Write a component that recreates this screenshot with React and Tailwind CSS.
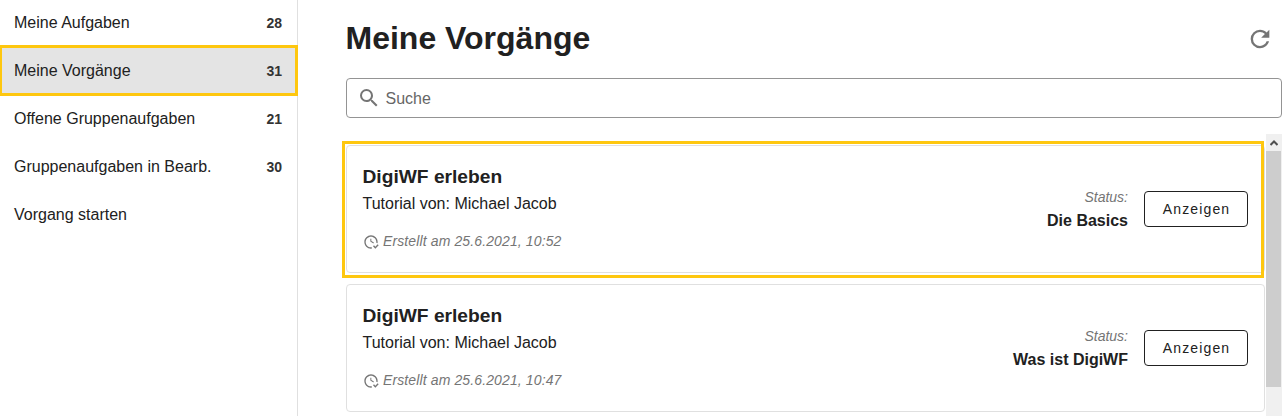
const navItems = [
  { label: 'Meine Aufgaben', count: 28 },
  { label: 'Meine Vorgänge', count: 31, active: true },
  { label: 'Offene Gruppenaufgaben', count: 21 },
  { label: 'Gruppenaufgaben in Bearb.', count: 30 },
  { label: 'Vorgang starten' },
];

const processes = [
  { title: 'DigiWF erleben', text: 'Tutorial von: Michael Jacob', created: '25.6.2021, 10:52', status: 'Die Basics', marked: true },
  { title: 'DigiWF erleben', text: 'Tutorial von: Michael Jacob', created: '25.6.2021, 10:47', status: 'Was ist DigiWF' },
];

function Icon({ d, className }) {
  return (
    <svg viewBox="0 0 24 24" fill="currentColor" className={className} aria-hidden="true">
      <path d={d} />
    </svg>
  );
}

const REFRESH =
  'M17.65,6.35C16.2,4.9 14.21,4 12,4A8,8 0 0,0 4,12A8,8 0 0,0 12,20C15.73,20 18.84,17.45 19.73,14H17.65C16.83,16.33 14.61,18 12,18A6,6 0 0,1 6,12A6,6 0 0,1 12,6C13.66,6 15.14,6.69 16.22,7.78L13,11H20V4L17.65,6.35Z';
const MAGNIFY =
  'M9.5,3A6.5,6.5 0 0,1 16,9.5C16,11.11 15.41,12.59 14.44,13.73L14.71,14H15.5L20.5,19L19,20.5L14,15.5V14.71L13.73,14.44C12.59,15.41 11.11,16 9.5,16A6.5,6.5 0 0,1 3,9.5A6.5,6.5 0 0,1 9.5,3M9.5,5C7,5 5,7 5,9.5C5,12 7,14 9.5,14C12,14 14,12 14,9.5C14,7 12,5 9.5,5Z';
const CLOCK_CHECK =
  'M23.5 17L18.5 22L15 18.5L16.5 17L18.5 19L22 15.5L23.5 17M13.1 19.9C12.7 20 12.4 20 12 20C7.6 20 4 16.4 4 12S7.6 4 12 4 20 7.6 20 12C20 12.4 20 12.7 19.9 13.1C20.6 13.2 21.2 13.4 21.8 13.7C21.9 13.1 22 12.6 22 12C22 6.5 17.5 2 12 2S2 6.5 2 12C2 17.5 6.5 22 12 22C12.6 22 13.2 21.9 13.7 21.8C13.4 21.3 13.2 20.7 13.1 19.9M15.6 14.1L11 11.3V7H12.5V10.5L16.4 12.8C16.1 13.2 15.8 13.6 15.6 14.1Z';

function NavItem({ label, count, active }) {
  return (
    <li className={`relative flex h-12 items-center justify-between pl-3.5 pr-[15px] ${active ? 'bg-[#e4e4e4]' : ''}`}>
      <span className="pt-0.5 text-base">{label}</span>
      {count && <span className="pt-0.5 text-[14px] font-bold text-[#333]">{count}</span>}
      {active && (
        <span className="pointer-events-none absolute -top-px -right-px -bottom-0.5 left-0 border-[3px] border-l-2 border-[#fec70f] bg-transparent" />
      )}
    </li>
  );
}

function ProcessCard({ title, text, created, status, marked }) {
  return (
    <article className="relative flex h-32 shrink-0 items-center justify-between rounded border border-[#e0e0e0] pr-4 pl-[15.5px]">
      <div className="flex flex-col pb-0.5">
        <h2 className="text-[19.2px] leading-7 font-bold">{title}</h2>
        <p className="text-base leading-[26px]">{text}</p>
        <p className="mt-3 flex items-center text-[14px] leading-6 text-[#757575] italic">
          <Icon d={CLOCK_CHECK} className="mt-0.5 mr-[4.5px] size-4" />
          <span className="tracking-[0.12px]">Erstellt am {created}</span>
        </p>
      </div>
      <div className="flex items-center gap-4">
        <div className="text-right">
          <p className="py-px text-[14px] leading-[22px] text-[#757575] italic">Status:</p>
          <p className="text-base leading-6 font-bold">{status}</p>
        </div>
        <button className="h-9 w-[104px] rounded border border-[#212121] pl-px text-[14px] tracking-[1.15px]">Anzeigen</button>
      </div>
      {marked && <span className="pointer-events-none absolute -top-[5px] right-0 -bottom-1.5 -left-[5px] border-[3px] border-[#fec70f]" />}
    </article>
  );
}

export default function App() {
  return (
    <div className="flex h-[416px] w-[1285px] overflow-hidden bg-white font-['Liberation_Sans',Arial,sans-serif] text-[#212121]">
      <nav className="w-[298px] shrink-0 border-r border-[#e0e0e0]">
        <ul className="-mt-0.5">
          {navItems.map((item) => (
            <NavItem key={item.label} {...item} />
          ))}
        </ul>
      </nav>
      <main className="flex min-w-0 flex-1 flex-col pr-[3px] pl-12">
        <header className="flex h-[78px] shrink-0 items-center justify-between pr-2">
          <h1 className="-ml-[0.5px] pb-0.5 text-[32px] leading-10 font-bold">Meine Vorgänge</h1>
          <Icon d={REFRESH} className="mb-px size-7 text-[#757575]" />
        </header>
        <div className="flex h-10 shrink-0 items-center gap-[4.5px] rounded border border-[#949494] pl-2.5 text-[#666]">
          <Icon d={MAGNIFY} className="size-6 text-[#757575]" />
          <span className="pt-0.5">Suche</span>
        </div>
        <div className="mt-4 flex min-h-0 flex-1">
          <div className="flex min-w-0 flex-1 flex-col gap-[11px] pt-[11px] pr-px">
            {processes.map((process) => (
              <ProcessCard key={process.created} {...process} />
            ))}
          </div>
          <div className="flex w-4 flex-col bg-[#f0f0f0]">
            <div className="flex h-[17px] shrink-0 items-center justify-center">
              <svg viewBox="0 0 8 6" className="mr-px h-1.5 w-2" fill="none" stroke="#505050" strokeWidth="2">
                <path d="M0.5 5L4 1.5L7.5 5" />
              </svg>
            </div>
            <div className="mr-px h-[236px] bg-[#cdcdcd]" />
          </div>
        </div>
      </main>
    </div>
  );
}
